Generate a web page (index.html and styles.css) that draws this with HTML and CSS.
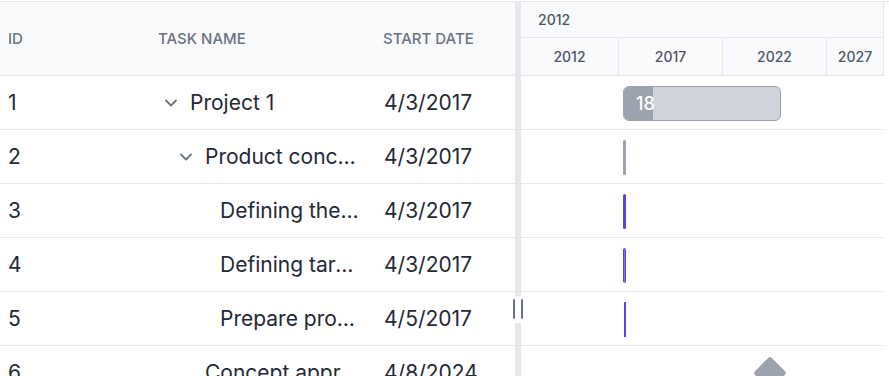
FILE: index.html
```html
<!DOCTYPE html>
<html lang="en">
<head>
    <meta charset="UTF-8">
    <meta name="viewport" content="width=device-width, initial-scale=1.0">
    <title>Gantt</title>
    <link rel="stylesheet" href="styles.css">
</head>
<body>
    <div class="gantt">
        <div class="grid">
            <div class="grid-head">
                <div class="col col-id">ID</div>
                <div class="col col-task">Task name</div>
                <div class="col col-start">Start date</div>
            </div>

            <div class="grid-row">
                <div class="col col-id">1</div>
                <div class="col col-task">
                    <span class="toggle"><svg width="12" height="8" viewBox="0 0 12 8"><path d="M1 1.5 L6 6.5 L11 1.5" /></svg></span>
                    <span class="task-text">Project 1</span>
                </div>
                <div class="col col-start">4/3/2017</div>
            </div>
            <div class="grid-row">
                <div class="col col-id">2</div>
                <div class="col col-task level-1">
                    <span class="toggle"><svg width="12" height="8" viewBox="0 0 12 8"><path d="M1 1.5 L6 6.5 L11 1.5" /></svg></span>
                    <span class="task-text">Product concept</span>
                </div>
                <div class="col col-start">4/3/2017</div>
            </div>
            <div class="grid-row">
                <div class="col col-id">3</div>
                <div class="col col-task level-2">
                    <span class="toggle"></span>
                    <span class="task-text">Defining the product</span>
                </div>
                <div class="col col-start">4/3/2017</div>
            </div>
            <div class="grid-row">
                <div class="col col-id">4</div>
                <div class="col col-task level-2">
                    <span class="toggle"></span>
                    <span class="task-text">Defining target audience</span>
                </div>
                <div class="col col-start">4/3/2017</div>
            </div>
            <div class="grid-row">
                <div class="col col-id">5</div>
                <div class="col col-task level-2">
                    <span class="toggle"></span>
                    <span class="task-text">Prepare product sketch</span>
                </div>
                <div class="col col-start">4/5/2017</div>
            </div>
            <div class="grid-row">
                <div class="col col-id">6</div>
                <div class="col col-task level-1">
                    <span class="toggle"></span>
                    <span class="task-text">Concept approval</span>
                </div>
                <div class="col col-start">4/8/2024</div>
            </div>
        </div>

        <div class="splitter">
            <span class="handle"><i></i><i></i></span>
        </div>

        <div class="chart">
            <div class="scale">
                <div class="scale-top">2012</div>
                <div class="scale-bottom">
                    <div class="year first">2012</div>
                    <div class="year">2017</div>
                    <div class="year">2022</div>
                    <div class="year last">2027</div>
                </div>
            </div>

            <div class="chart-row">
                <div class="bar project" style="margin-left: 102px; width: 158px;">
                    <div class="progress" style="width: 29px;"></div>
                    <span class="bar-label">18</span>
                </div>
            </div>
            <div class="chart-row">
                <div class="bar thin summary" style="margin-left: 102px;"></div>
            </div>
            <div class="chart-row">
                <div class="bar thin task" style="margin-left: 102px;"></div>
            </div>
            <div class="chart-row">
                <div class="bar thin task light" style="margin-left: 102px;"></div>
            </div>
            <div class="chart-row">
                <div class="bar thin task narrow" style="margin-left: 103px;"></div>
            </div>
            <div class="chart-row">
                <div class="milestone" style="margin-left: 237px;"></div>
            </div>
        </div>
    </div>
</body>
</html>
```

FILE: styles.css
```css
html, body {
    overflow: hidden;
    height: 376px;
}
body {
    margin: 0;
    padding-top: 1px;
    font-family: Inter, "Noto Sans", sans-serif;
    color: #1f2937;
    background-color: #fff;
}
.gantt {
    display: flex;
    border-top: 1px solid #e5e7eb;
    width: 889px;
}

/* grid */
.grid {
    width: 515px;
    flex-shrink: 0;
}
.grid-head {
    display: flex;
    align-items: center;
    height: 73px;
    background-color: #f9fafb;
    border-bottom: 1px solid #e5e7eb;
    font-size: 15px;
    font-weight: 500;
    text-transform: uppercase;
    color: #6b7280;
}
.grid-row {
    display: flex;
    align-items: center;
    height: 53px;
    border-bottom: 1px solid #e5e7eb;
    font-size: 21px;
}
.col {
    box-sizing: border-box;
    padding: 0 8px;
    white-space: nowrap;
}
.col-id {
    width: 150px;
}
.col-task {
    width: 225px;
    display: flex;
    align-items: center;
    gap: 6px;
    padding-right: 15px;
}
.col-task.level-1 {
    padding-left: 23px;
}
.col-task.level-2 {
    padding-left: 38px;
}
.col-start {
    width: 140px;
}
.grid-row .col-start {
    padding-left: 9px;
}
.toggle {
    width: 26px;
    flex-shrink: 0;
    display: flex;
    justify-content: center;
    align-items: center;
}
.toggle svg path {
    fill: none;
    stroke: #6b7280;
    stroke-width: 1.8;
    stroke-linecap: round;
    stroke-linejoin: round;
}
.task-text {
    overflow: hidden;
    text-overflow: ellipsis;
    min-width: 0;
}

/* splitter */
.splitter {
    position: relative;
    width: 6px;
    flex-shrink: 0;
    background-color: #e5e7eb;
}
.splitter .handle {
    position: absolute;
    top: 294px;
    left: -3px;
    width: 12px;
    height: 27px;
    background-color: #fff;
    display: flex;
    justify-content: space-between;
    padding: 3px 1px;
    box-sizing: border-box;
}
.splitter .handle i {
    width: 2px;
    height: 20px;
    border-radius: 1px;
    background-color: #6b7280;
}

/* chart */
.chart {
    width: 363px;
    flex-shrink: 0;
}
.scale {
    background-color: #f9fafb;
    border-right: 1px solid #e5e7eb;
    border-bottom: 1px solid #e5e7eb;
    font-size: 14px;
    font-weight: 500;
    color: #4b5563;
}
.scale-top {
    height: 35px;
    line-height: 35px;
    padding-left: 17px;
    border-bottom: 1px solid #e5e7eb;
}
.scale-bottom {
    display: flex;
    height: 37px;
}
.year {
    width: 104px;
    box-sizing: border-box;
    border-right: 1px solid #e5e7eb;
    display: flex;
    align-items: center;
    justify-content: center;
}
.year.first {
    width: 98px;
}
.year.last {
    flex: 1;
    border-right: none;
}
.chart-row {
    display: flex;
    align-items: flex-start;
    width: 362px;
    height: 53px;
    border-bottom: 1px solid #e5e7eb;
}
.bar {
    box-sizing: border-box;
    margin-top: 10px;
    height: 35px;
}
.bar.project {
    position: relative;
    display: flex;
    align-items: center;
    background-color: #d1d5db;
    border: 1px solid #9ca3af;
    border-radius: 6px;
    overflow: hidden;
}
.bar.project .progress {
    align-self: stretch;
    background-color: #9ca3af;
}
.bar-label {
    position: absolute;
    left: 12px;
    font-size: 18px;
    font-weight: 500;
    color: #fff;
}
.bar.thin {
    width: 3px;
    border-radius: 2px;
}
.bar.summary {
    background-color: #9ca3af;
}
.bar.task {
    background-color: #4f46e5;
}
.bar.task.light {
    background-color: #7c75ee;
    border: 1px solid #4f46e5;
}
.bar.task.narrow {
    width: 2px;
    border-radius: 0;
}
.milestone {
    margin-top: 15px;
    width: 24px;
    height: 24px;
    border-radius: 3px;
    background-color: #9ca3af;
    transform: rotate(45deg);
}
```
